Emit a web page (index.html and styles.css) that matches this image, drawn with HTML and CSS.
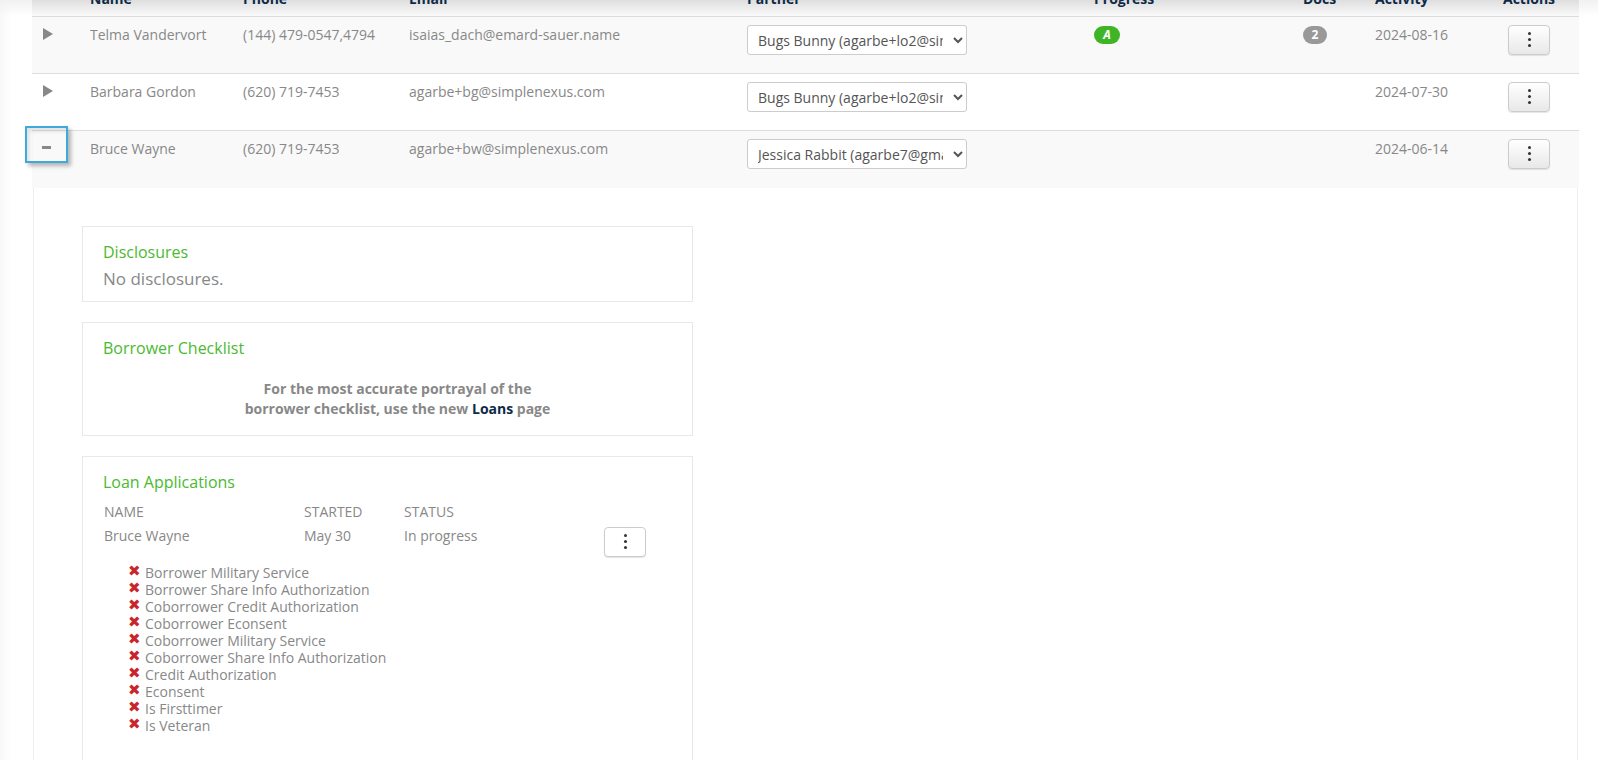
FILE: index.html
```html
<!DOCTYPE html>
<html lang="en">
<head>
<meta charset="utf-8">
<title>Leads</title>
<link rel="stylesheet" href="styles.css">
</head>
<body>
<main class="page">
  <table class="leads">
    <colgroup>
      <col class="c-toggle"><col class="c-name"><col class="c-phone"><col class="c-email"><col class="c-partner"><col class="c-progress"><col class="c-docs"><col class="c-activity"><col class="c-actions">
    </colgroup>
    <thead>
      <tr>
        <th></th><th>Name</th><th>Phone</th><th>Email</th><th>Partner</th><th>Progress</th><th>Docs</th><th>Activity</th><th>Actions</th>
      </tr>
    </thead>
    <tbody>
      <tr class="odd">
        <td class="toggle"><svg class="tri" viewBox="0 0 10 12"><path d="M0 0 L10 6 L0 12 Z"/></svg></td>
        <td>Telma Vandervort</td><td>(144) 479-0547,4794</td><td>isaias_dach@emard-sauer.name</td>
        <td><select class="partner"><option>Bugs Bunny (agarbe+lo2@simplenexus.com)</option></select></td>
        <td><span class="pill green">A</span></td><td><span class="pill grey">2</span></td><td>2024-08-16</td>
        <td><button class="kebab row-kebab" type="button" aria-label="Actions"><span class="dots"></span></button></td>
      </tr>
      <tr>
        <td class="toggle"><svg class="tri" viewBox="0 0 10 12"><path d="M0 0 L10 6 L0 12 Z"/></svg></td>
        <td>Barbara Gordon</td><td>(620) 719-7453</td><td>agarbe+bg@simplenexus.com</td>
        <td><select class="partner"><option>Bugs Bunny (agarbe+lo2@simplenexus.com)</option></select></td>
        <td></td><td></td><td>2024-07-30</td>
        <td><button class="kebab row-kebab" type="button" aria-label="Actions"><span class="dots"></span></button></td>
      </tr>
      <tr class="odd last">
        <td class="toggle"><span class="focus-box"><span class="minus"></span></span></td>
        <td>Bruce Wayne</td><td>(620) 719-7453</td><td>agarbe+bw@simplenexus.com</td>
        <td><select class="partner"><option>Jessica Rabbit (agarbe7@gmail.com)</option></select></td>
        <td></td><td></td><td>2024-06-14</td>
        <td><button class="kebab row-kebab" type="button" aria-label="Actions"><span class="dots"></span></button></td>
      </tr>
    </tbody>
  </table>
  <section class="detail">
    <div class="card disclosures">
      <h3>Disclosures</h3>
      <p class="none">No disclosures.</p>
    </div>
    <div class="card checklist">
      <h3>Borrower Checklist</h3>
      <p class="notice">For the most accurate portrayal of the<br>borrower checklist, use the new <a href="#">Loans</a> page</p>
    </div>
    <div class="card loans">
      <h3>Loan Applications</h3>
      <div class="loan-grid">
        <span>NAME</span><span>STARTED</span><span>STATUS</span><span></span>
        <span>Bruce Wayne</span><span>May 30</span><span>In progress</span>
        <button class="kebab plain" type="button" aria-label="Loan actions"><span class="dots"></span></button>
      </div>
      <ul class="missing">
        <li>Borrower Military Service</li>
        <li>Borrower Share Info Authorization</li>
        <li>Coborrower Credit Authorization</li>
        <li>Coborrower Econsent</li>
        <li>Coborrower Military Service</li>
        <li>Coborrower Share Info Authorization</li>
        <li>Credit Authorization</li>
        <li>Econsent</li>
        <li>Is Firsttimer</li>
        <li>Is Veteran</li>
      </ul>
    </div>
  </section>
</main>
</body>
</html>
```
FILE: styles.css
```css
* { box-sizing: border-box; }
html, body { margin: 0; height: 760px; overflow: hidden; background: #fff; }
body {
  font-family: "Open Sans", sans-serif;
  font-size: 14px;
  color: #888;
  background:
    linear-gradient(#f1f1f1, rgba(255,255,255,0) 16px),
    linear-gradient(90deg, #f8f8f8, rgba(255,255,255,0) 12px),
    #fff;
}
.page { margin: -24px 19px 0 32px; }
.leads { width: 100%; border-collapse: collapse; table-layout: fixed; }
.c-toggle { width: 58px; }
.c-name { width: 153px; }
.c-phone { width: 166px; }
.c-email { width: 338px; }
.c-partner { width: 347px; }
.c-progress { width: 209px; }
.c-docs { width: 72px; }
.c-activity { width: 128px; }
.leads th {
  height: 40px;
  padding: 0 0 7px;
  text-align: left;
  font-weight: 700;
  color: #0e2a47;
  line-height: 20px;
  vertical-align: bottom;
  white-space: nowrap;
  background: linear-gradient(to top, #fafafa, #dedede 16px);
}
.leads tbody tr { height: 57px; }
.leads tbody tr.last { height: 58px; }
.leads td { border-top: 1px solid #ddd; padding: 8px 0 0; vertical-align: top; line-height: 20px; white-space: nowrap; }
.odd td { background: #f9f9f9; }
.toggle { position: relative; }
.tri { display: block; width: 10px; height: 12px; fill: #888; margin: 3px 0 0 11px; }
.focus-box {
  position: absolute;
  left: -7px;
  top: -5px;
  width: 43px;
  height: 37px;
  border: 2px solid #3fa8dc;
  box-shadow: 3px 3px 4px rgba(0,0,0,.28), inset 3px 3px 4px rgba(0,0,0,.12);
}
.minus { position: absolute; left: 15px; top: 18px; width: 9px; height: 3px; background: #888; }
.partner {
  display: block;
  width: 220px;
  height: 30px;
  padding: 1px 7px 0 6px;
  font-family: "Open Sans", sans-serif;
  font-size: 14px;
  color: #555;
  background: #fff;
  border: 1px solid #ccc;
  border-radius: 3px;
}
.pill { display: inline-block; height: 18px; border-radius: 9px; color: #fff; font-size: 12px; font-weight: 700; line-height: 18px; text-align: center; vertical-align: top; margin-top: 1px; }
.pill.green { width: 26px; background: #3fb526; font-style: italic; }
.pill.grey { width: 24px; background: #999; }
.kebab {
  display: block;
  width: 42px;
  height: 30px;
  padding: 0;
  border: 1px solid #ccc;
  border-radius: 4px;
  background: linear-gradient(#fff, #e8e8e8);
  box-shadow: 0 1px 1px rgba(0,0,0,.1);
  position: relative;
}
.row-kebab { margin-left: 5px; }
.dots { position: absolute; left: 18.5px; top: 6px; width: 3px; height: 3px; border-radius: 50%; background: #333; box-shadow: 0 6px 0 #333, 0 12px 0 #333; }
.kebab.plain { background: #fff; }
.detail { height: 640px; border-left: 1px solid #eee; border-right: 1px solid #eee; padding: 38px 0 0 48px; margin: 0 1px 0 1px; }
.card { width: 611px; border: 1px solid #e8e8e8; padding: 13px 20px; margin-bottom: 20px; }
.card h3 { margin: 0; font-size: 16px; font-weight: 400; line-height: 24px; color: #4aba30; }
.none { margin: 1px 0 0; font-size: 17px; line-height: 28px; }
.disclosures { height: 76px; }
.checklist { height: 114px; }
.notice { margin: 19px 0 0; padding-left: 20px; text-align: center; font-weight: 700; line-height: 20px; }
.notice a { color: #0e2a47; text-decoration: none; }
.loans { height: 400px; }
.loan-grid { display: grid; grid-template-columns: 200px 100px 1fr 42px; grid-template-rows: 24px 33px; margin: 6px 26px 0 1px; line-height: 23px; }
.loan-grid .kebab { margin-top: 3px; }
.missing { list-style: none; margin: 7px 0 0; padding: 0 0 0 25px; }
.missing li { line-height: 17px; padding-left: 17px; position: relative; }
.missing li::before { content: "\2716"; position: absolute; left: 0; top: -2px; color: #c9252c; font-size: 15px; line-height: 17px; }
```
